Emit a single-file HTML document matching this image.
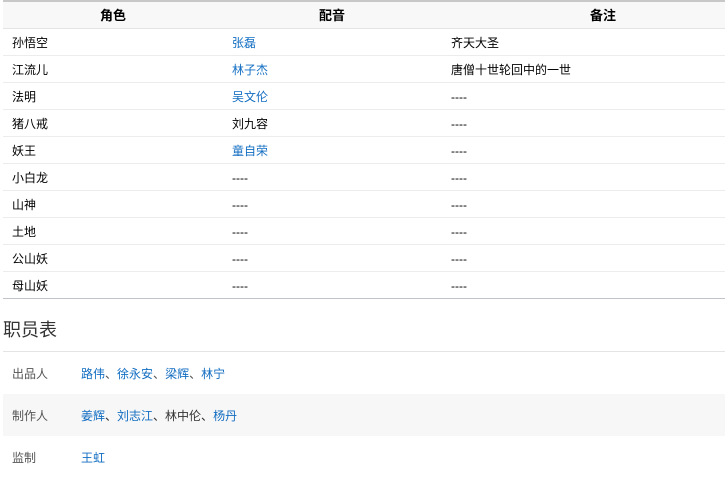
<!DOCTYPE html>
<html><head><meta charset="utf-8"><style>
*{margin:0;padding:0;box-sizing:border-box}
body{width:725px;height:462px;overflow:hidden;background:#fff;font-family:"Liberation Sans","Noto Sans CJK SC",sans-serif;font-size:12px;color:#000;position:relative}
.a{position:absolute;white-space:nowrap}
.b{color:#136ec2}
.row{position:absolute;left:3px;width:722px;height:27px;border-bottom:1px solid #ececec}
.t{position:absolute;line-height:27px;top:1px}
</style></head><body>
<div class="a" style="left:3px;top:0;width:722px;height:2px;background:#c8c8c8"></div>
<div class="a" style="left:3px;top:2px;width:722px;height:27px;background:#f8f8f8;border-bottom:1px solid #e4e4e4;font-weight:bold;font-size:13px">
<span class="t" style="left:97px;top:0">角色</span><span class="t" style="left:316px;top:0">配音</span><span class="t" style="left:587px;top:0">备注</span></div>

<div class="row" style="top:29px"><span class="t" style="left:9px">孙悟空</span><span class="t b" style="left:229px">张磊</span><span class="t" style="left:448px">齐天大圣</span></div>
<div class="row" style="top:56px"><span class="t" style="left:9px">江流儿</span><span class="t b" style="left:229px">林子杰</span><span class="t" style="left:448px">唐僧十世轮回中的一世</span></div>
<div class="row" style="top:83px"><span class="t" style="left:9px">法明</span><span class="t b" style="left:229px">吴文伦</span><span class="t" style="left:448px">----</span></div>
<div class="row" style="top:110px"><span class="t" style="left:9px">猪八戒</span><span class="t" style="left:229px">刘九容</span><span class="t" style="left:448px">----</span></div>
<div class="row" style="top:137px"><span class="t" style="left:9px">妖王</span><span class="t b" style="left:229px">童自荣</span><span class="t" style="left:448px">----</span></div>
<div class="row" style="top:164px"><span class="t" style="left:9px">小白龙</span><span class="t" style="left:229px">----</span><span class="t" style="left:448px">----</span></div>
<div class="row" style="top:191px"><span class="t" style="left:9px">山神</span><span class="t" style="left:229px">----</span><span class="t" style="left:448px">----</span></div>
<div class="row" style="top:218px"><span class="t" style="left:9px">土地</span><span class="t" style="left:229px">----</span><span class="t" style="left:448px">----</span></div>
<div class="row" style="top:245px"><span class="t" style="left:9px">公山妖</span><span class="t" style="left:229px">----</span><span class="t" style="left:448px">----</span></div>
<div class="row" style="top:272px;border-bottom:1px solid #c0c4c8"><span class="t" style="left:9px">母山妖</span><span class="t" style="left:229px">----</span><span class="t" style="left:448px">----</span></div>

<div class="a" style="left:3px;top:318px;font-size:18px;color:#333;line-height:24px">职员表</div>
<div class="a" style="left:3px;top:351px;width:722px;height:1px;background:#e4e4e4"></div>

<div class="a" style="left:3px;top:353px;width:722px;height:42px;line-height:42px;color:#555">
<span class="a" style="left:9px">出品人</span><span class="a" style="left:78px"><span class="b">路伟</span>、<span class="b">徐永安</span>、<span class="b">梁辉</span>、<span class="b">林宁</span></span></div>
<div class="a" style="left:3px;top:394px;width:722px;height:42px;line-height:44px;color:#555;background:#f7f7f7">
<span class="a" style="left:9px">制作人</span><span class="a" style="left:78px;color:#333"><span class="b">姜辉</span>、<span class="b">刘志江</span>、林中伦、<span class="b">杨丹</span></span></div>
<div class="a" style="left:3px;top:437px;width:722px;height:42px;line-height:42px;color:#555">
<span class="a" style="left:9px">监制</span><span class="a b" style="left:78px">王虹</span></div>
</body></html>
